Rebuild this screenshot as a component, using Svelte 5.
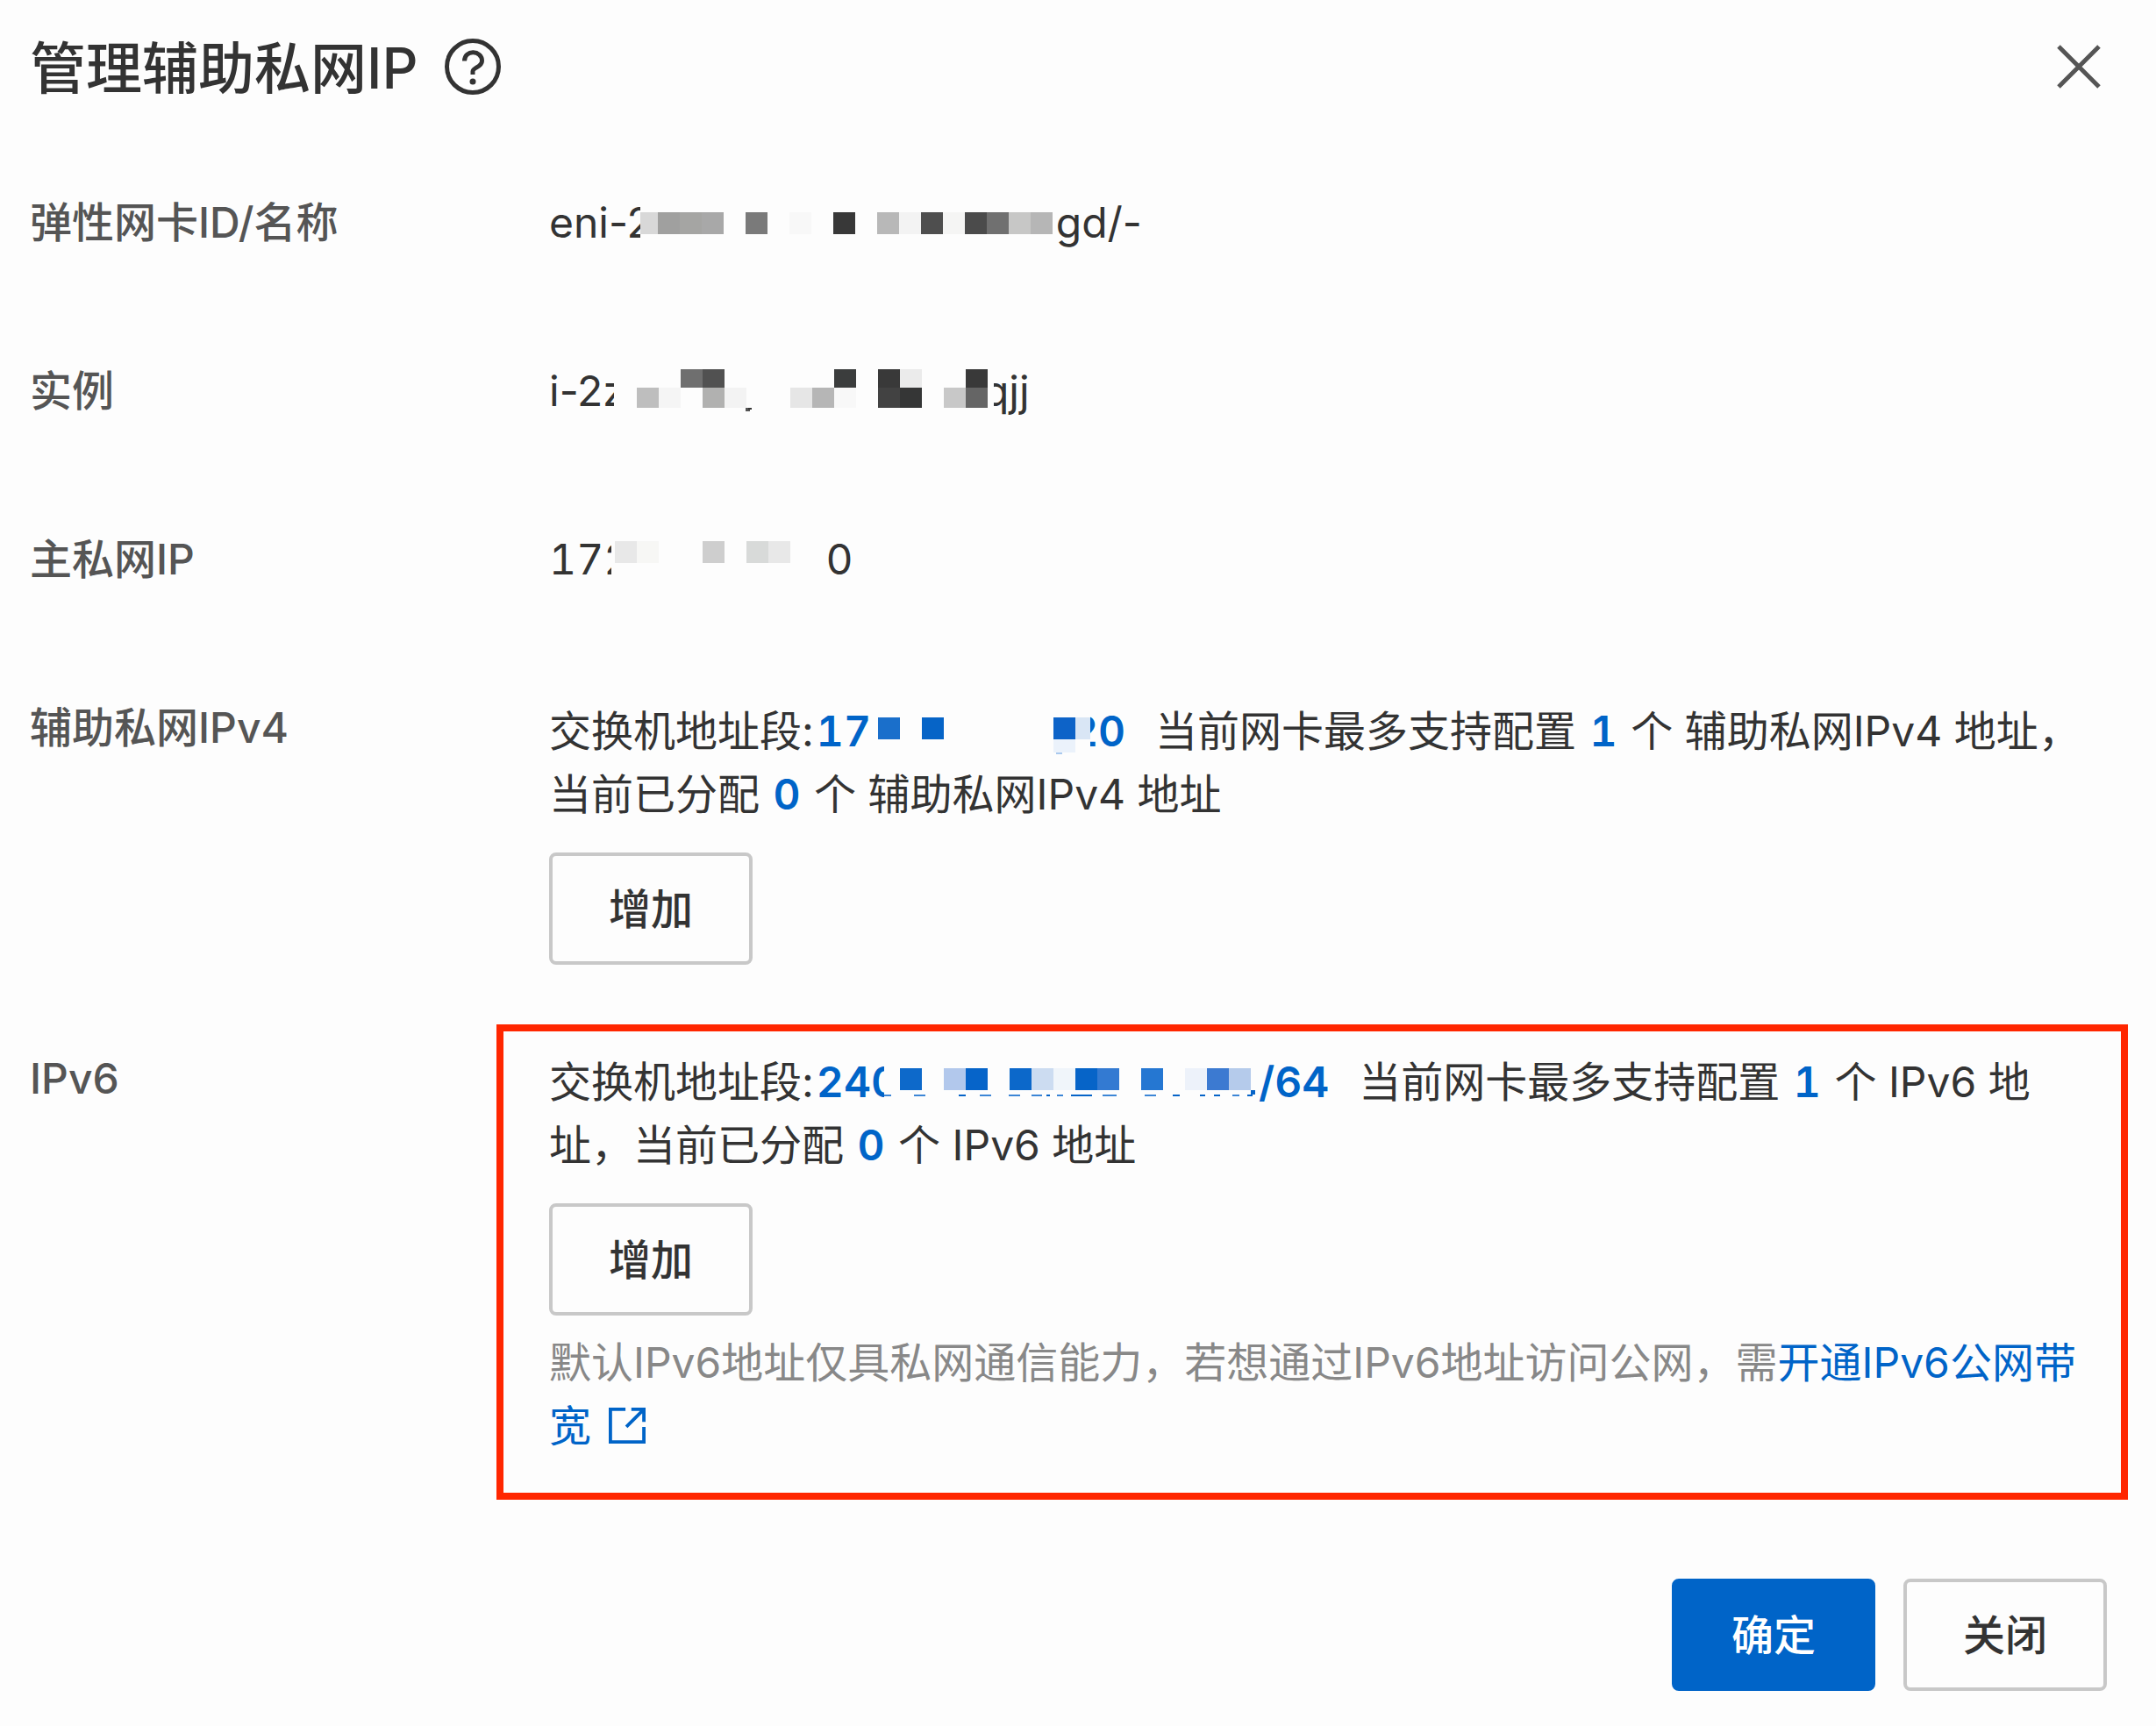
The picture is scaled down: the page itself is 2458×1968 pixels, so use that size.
<script>
  // Masked parts of the values, drawn as pixel blocks: [x, y, width, height, fill]
  const masks = {
    eni: {
      width: 474,
      cells: [
        [0, 26, 20, 25, '#d8d8d8'],
        [20, 26, 25, 25, '#a0a09f'],
        [45, 26, 25, 25, '#a5a5a3'],
        [70, 26, 25, 25, '#a8a8a8'],
        [120, 26, 25, 25, '#7a7a7a'],
        [170, 26, 25, 25, '#f8f8f8'],
        [220, 26, 25, 25, '#383838'],
        [270, 26, 25, 25, '#b8b8b8'],
        [295, 26, 25, 25, '#f3f3f3'],
        [320, 26, 25, 25, '#4e4e4e'],
        [345, 26, 25, 25, '#f5f5f4'],
        [370, 26, 25, 25, '#4b4b4b'],
        [395, 26, 25, 25, '#707070'],
        [420, 26, 25, 25, '#c7c7c6'],
        [445, 26, 25, 25, '#b6b6b6']
      ]
    },
    instance: {
      width: 433,
      cells: [
        [76, 13, 25, 21, '#6f6f6f'],
        [101, 13, 25, 21, '#515151'],
        [251, 13, 25, 21, '#3b3d3d'],
        [301, 13, 25, 21, '#393939'],
        [326, 13, 25, 21, '#ebebeb'],
        [401, 13, 25, 21, '#393939'],
        [26, 34, 25, 23, '#bebebe'],
        [51, 34, 25, 23, '#f5f5f5'],
        [101, 34, 25, 23, '#b1b1b0'],
        [126, 34, 25, 23, '#f3f3f3'],
        [201, 34, 25, 23, '#e6e6e6'],
        [226, 34, 25, 23, '#b6b6b6'],
        [251, 34, 25, 23, '#f8f8f8'],
        [301, 34, 25, 23, '#424242'],
        [326, 34, 25, 23, '#353636'],
        [376, 34, 25, 23, '#c8c8c8'],
        [401, 34, 25, 23, '#656565'],
        [150, 57, 5, 4, '#555'],
        [153, 57, 4, 2, '#333']
      ]
    },
    primary: {
      width: 244,
      cells: [
        [4, 17, 25, 25, '#e8e8e8'],
        [29, 17, 25, 25, '#f7f7f5'],
        [104, 17, 25, 25, '#cecece'],
        [154, 17, 25, 25, '#d8dad9'],
        [179, 17, 25, 25, '#e8e8e8']
      ]
    },
    ipv4: {
      width: 250,
      cells: [
        [8, 22, 25, 25, '#1a6fcb'],
        [58, 22, 25, 25, '#0664c7'],
        [208, 22, 25, 25, '#0d63c8'],
        [233, 22, 17, 25, '#d9e6f5'],
        [208, 47, 25, 15, '#ebf2fb'],
        [211, 62, 7, 2, '#a9c9ee']
      ]
    },
    ipv6: {
      width: 427,
      cells: [
        [18, 22, 25, 25, '#0d69ca'],
        [68, 22, 25, 25, '#b2c8ec'],
        [93, 22, 25, 25, '#0664c9'],
        [143, 22, 25, 25, '#0c68ca'],
        [168, 22, 25, 25, '#ccdcf1'],
        [193, 22, 25, 25, '#f0f5fa'],
        [218, 22, 25, 25, '#0664c8'],
        [243, 22, 25, 25, '#337ad2'],
        [293, 22, 25, 25, '#2577d2'],
        [343, 22, 25, 25, '#edf2fa'],
        [368, 22, 25, 25, '#3c7ad1'],
        [393, 22, 25, 25, '#b5cbeb'],
        [418, 47, 5, 5, '#0664c8'],
        // feet of the characters that show below the blocks
        [0, 52, 8, 2, '#3c86d6'],
        [34, 52, 13, 2, '#3c86d6'],
        [85, 52, 8, 2, '#0664c8'],
        [109, 52, 13, 2, '#3c86d6'],
        [142, 52, 13, 2, '#3c86d6'],
        [168, 52, 12, 2, '#3c86d6'],
        [185, 52, 4, 2, '#0664c8'],
        [197, 52, 7, 2, '#3c86d6'],
        [213, 52, 24, 2, '#0664c8'],
        [249, 52, 16, 2, '#3c86d6'],
        [297, 52, 13, 2, '#3c86d6'],
        [329, 52, 8, 2, '#0664c8'],
        [360, 52, 6, 2, '#0664c8'],
        [376, 52, 7, 2, '#0664c8'],
        [397, 52, 8, 2, '#3c86d6'],
        [414, 52, 6, 2, '#0664c8']
      ]
    }
  };
</script>

{#snippet mask(name)}
  <svg class="mask {name}" width={masks[name].width} height="72" aria-hidden="true">
    <rect width="100%" height="100%" fill="#fdfdfd" />
    {#each masks[name].cells as [x, y, w, h, fill]}
      <rect {x} {y} width={w} height={h} {fill} shape-rendering="crispEdges" />
    {/each}
  </svg>
{/snippet}

<div class="dialog" role="dialog" aria-labelledby="dialog-title">
  <header>
    <h1 id="dialog-title">管理辅助私网IP</h1>
    <button class="icon-btn help" aria-label="帮助">
      <svg width="64" height="64" viewBox="0 0 64 64" fill="none" stroke="currentColor" stroke-width="5">
        <circle cx="32" cy="32" r="29.500" />
        <path d="M22.500 25.500C22.500 12 42.500 13 42.500 25.500C42.500 32.500 32 33 32 37.500V41" />
        <circle cx="32" cy="49" r="3.500" fill="currentColor" stroke="none" />
      </svg>
    </button>
    <button class="icon-btn close" aria-label="关闭对话框">
      <svg width="50" height="50" viewBox="0 0 50 50" fill="none" stroke="currentColor" stroke-width="5">
        <path d="M2 2l46 46M48 2L2 48" />
      </svg>
    </button>
  </header>

  <dl>
    <div class="row">
      <dt>弹性网卡ID/名称</dt>
      <dd>eni-2{@render mask('eni')}gd/-</dd>
    </div>
    <div class="row">
      <dt>实例</dt>
      <dd>i-2z{@render mask('instance')}qjj</dd>
    </div>
    <div class="row">
      <dt>主私网IP</dt>
      <dd class="numeric">172{@render mask('primary')}0</dd>
    </div>
    <div class="row">
      <dt>辅助私网IPv4</dt>
      <dd>
        <p>
          交换机地址段:<b class="range">17{@render mask('ipv4')}20</b>当前网卡最多支持配置 <b>1</b> 个 辅助私网IPv4 地址，当前已分配 <b>0</b> 个 辅助私网IPv4 地址
        </p>
        <button class="btn">增加</button>
      </dd>
    </div>
    <div class="row">
      <dt>IPv6</dt>
      <dd class="marked">
        <p>
          交换机地址段:<b class="range">240{@render mask('ipv6')}/64</b>当前网卡最多支持配置 <b>1</b> 个 IPv6 地址，当前已分配 <b>0</b> 个 IPv6 地址
        </p>
        <button class="btn">增加</button>
        <p class="hint">
          默认IPv6地址仅具私网通信能力，若想通过IPv6地址访问公网，需<a href="#bandwidth">开通IPv6公网带宽
            <svg width="42" height="42" viewBox="0 0 44 44" fill="none" stroke="currentColor" stroke-width="4">
              <path d="M20 3H2v39h40V24M27 3h15v15M42 3L21 24" />
            </svg></a>
        </p>
      </dd>
    </div>
  </dl>

  <footer>
    <button class="btn primary">确定</button>
    <button class="btn">关闭</button>
  </footer>
</div>

<style>
  :global(body) {
    margin: 0;
    background: #fdfdfd;
  }

  .dialog {
    box-sizing: border-box;
    padding: 32px 56px 40px 34px;
    font-family: Inter, 'Noto Sans CJK SC', sans-serif;
    font-size: 48px;
    line-height: 72px;
    color: #333;
  }

  header {
    display: flex;
    align-items: center;
    height: 88px;
    margin-bottom: 98px;
  }

  h1 {
    margin: 0;
    padding-top: 4px;
    font-size: 64px;
    font-weight: 500;
    line-height: 88px;
  }

  .icon-btn {
    display: flex;
    padding: 0;
    border: none;
    background: transparent;
    color: #333;
    cursor: pointer;
  }

  .help {
    margin-left: 30px;
  }

  .close {
    margin-left: auto;
    margin-right: 7px;
    color: #555;
  }

  dl {
    display: grid;
    gap: 94px;
    margin: 0 0 90px;
  }

  .row {
    display: grid;
    grid-template-columns: 592px 1fr;
    min-height: 98px;
  }

  dt {
    font-weight: 500;
    color: #555;
  }

  dd {
    min-width: 0;
    margin: 0;
  }

  p {
    margin: 4px 0 30px;
    text-spacing-trim: space-all;
  }

  b {
    margin: 0 2px;
    font-weight: 600;
    color: #0064c8;
  }

  b,
  .numeric {
    font-variant-numeric: tabular-nums;
  }

  .range {
    margin: 0 34px 0 3px;
    white-space: nowrap;
  }

  .mask {
    position: relative;
    margin: -2px 0 2px -14px;
    vertical-align: top;
  }

  .mask.instance {
    margin-right: -12px;
  }

  .mask.primary {
    margin-left: -22px;
  }

  .mask.ipv4 {
    margin-left: 0;
    margin-right: -22px;
  }

  .mask.ipv6 {
    margin-left: -16px;
  }

  .marked {
    margin: -26px -24px 0 -60px;
    padding: 18px 20px 40px 52px;
    border: 8px solid #ff2600;
  }

  .btn {
    display: block;
    box-sizing: border-box;
    height: 128px;
    padding: 2px 64px 0;
    border: 4px solid #c8c8c8;
    border-radius: 8px;
    background: transparent;
    color: #333;
    font: inherit;
    font-weight: 500;
    cursor: pointer;
  }

  .btn.primary {
    border-color: #0064c8;
    background: #0064c8;
    color: #fff;
  }

  .hint {
    margin: 18px 0 0;
    color: #888;
  }

  .hint a {
    color: #0064c8;
    text-decoration: none;
  }

  .hint svg {
    margin-left: 6px;
    vertical-align: -3px;
  }

  footer {
    display: flex;
    justify-content: flex-end;
    gap: 32px;
  }
</style>
